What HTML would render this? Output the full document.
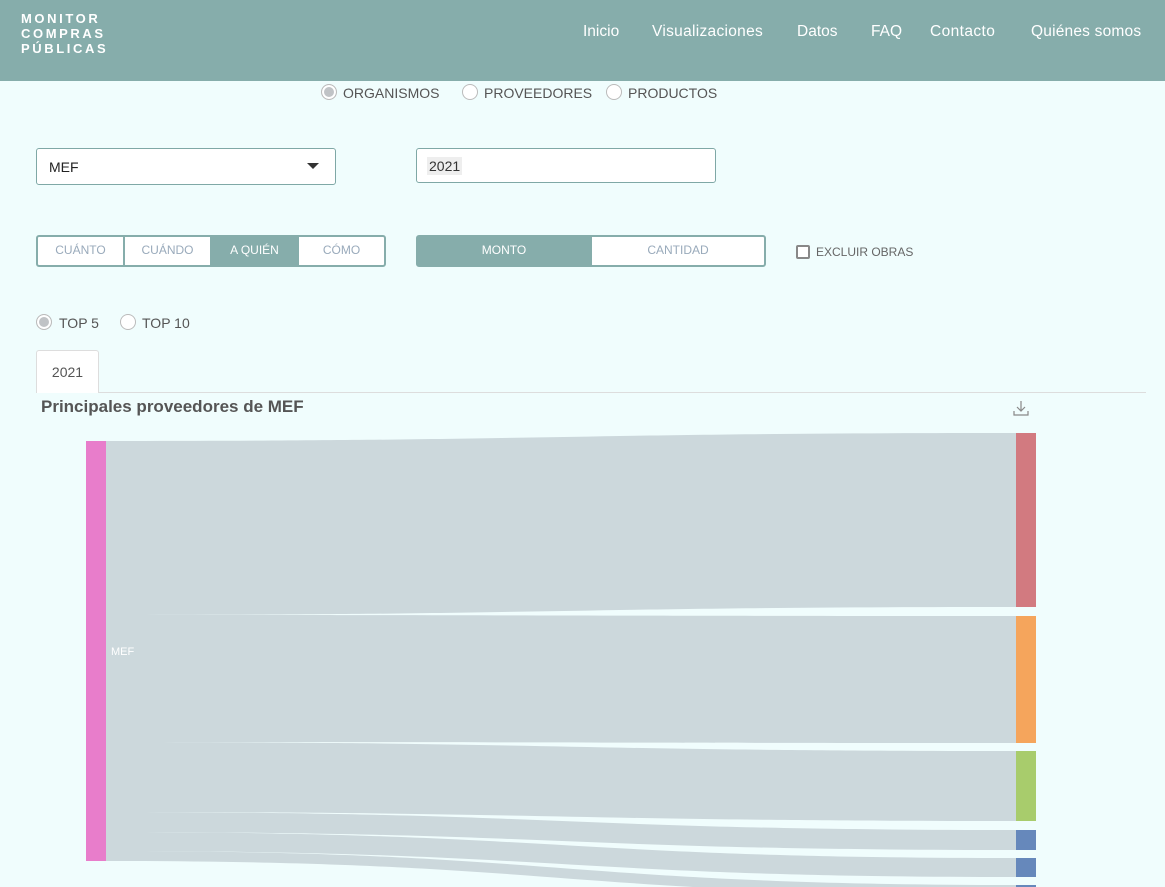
<!DOCTYPE html>
<html><head><meta charset="utf-8"><style>
*{box-sizing:border-box;margin:0;padding:0}
body{width:1165px;height:887px;overflow:hidden;background:#f0fdfd;font-family:"Liberation Sans",sans-serif;position:relative;color:#555}
.hdr{position:absolute;left:0;top:0;width:1165px;height:81px;background:#86adab}
.logo{position:absolute;left:21px;top:11px;color:#fff;font-weight:bold;font-size:13px;letter-spacing:2.6px;line-height:15px}
.nav{position:absolute;top:23px;color:#fff;font-size:15.5px;white-space:nowrap}
.a{position:absolute}
.radio{position:absolute;width:16px;height:16px;border-radius:50%;border:1px solid #bbb;background:#fff}
.radio.on{background:#c0c3c6;box-shadow:inset 0 0 0 2px #fff}
.lbl{position:absolute;font-size:14px;color:#555}
.box{position:absolute;background:#fff;border:1px solid #7fa8a6;border-radius:3px}
.seg{position:absolute;border:2px solid #86adab;border-radius:3px;display:flex;background:#fff}
.seg div{flex:1;text-align:center;font-size:12px;color:#9ab;line-height:27px;border-right:2px solid #86adab}
.seg div:last-child{border-right:none}
.seg .on{background:#86adab;color:#fff}
</style></head><body>
<div class="hdr"></div>
<div class="logo">MONITOR<br>COMPRAS<br>PÚBLICAS</div>
<div class="nav" style="left:583px;width:39px">Inicio</div>
<div class="nav" style="left:652px;width:115px;letter-spacing:0.3px">Visualizaciones</div>
<div class="nav" style="left:797px">Datos</div>
<div class="nav" style="left:871px">FAQ</div>
<div class="nav" style="left:930px;letter-spacing:0.4px">Contacto</div>
<div class="nav" style="left:1031px;letter-spacing:0.2px">Quiénes somos</div>

<div class="radio on" style="left:321px;top:84px"></div><div class="lbl" style="left:343px;top:85px">ORGANISMOS</div>
<div class="radio" style="left:462px;top:84px"></div><div class="lbl" style="left:484px;top:85px">PROVEEDORES</div>
<div class="radio" style="left:606px;top:84px"></div><div class="lbl" style="left:628px;top:85px">PRODUCTOS</div>

<div class="box" style="left:36px;top:148px;width:300px;height:37px"><span class="a" style="left:12px;top:10px;font-size:14px;color:#222">MEF</span><span class="a" style="left:270px;top:14px;width:0;height:0;border-left:6px solid transparent;border-right:6px solid transparent;border-top:6px solid #333"></span></div>
<div class="box" style="left:416px;top:148px;width:300px;height:35px"><span class="a" style="left:10px;top:8px;font-size:14px;color:#333;background:#eee;padding:1px 2px">2021</span></div>

<div class="seg" style="left:36px;top:235px;width:350px;height:32px"><div>CUÁNTO</div><div>CUÁNDO</div><div class="on">A QUIÉN</div><div>CÓMO</div></div>
<div class="seg" style="left:416px;top:235px;width:350px;height:32px"><div class="on">MONTO</div><div>CANTIDAD</div></div>
<div class="a" style="left:796px;top:245px;width:14px;height:14px;border:2px solid #888;border-radius:2px;background:#fff"></div>
<div class="a" style="left:816px;top:245px;font-size:12px;color:#666">EXCLUIR OBRAS</div>

<div class="radio on" style="left:36px;top:314px"></div><div class="lbl" style="left:59px;top:315px">TOP 5</div>
<div class="radio" style="left:120px;top:314px"></div><div class="lbl" style="left:142px;top:315px">TOP 10</div>

<div class="a" style="left:36px;top:392px;width:1110px;border-top:1px solid #ddd"></div>
<div class="a" style="left:36px;top:350px;width:63px;height:43px;background:#fff;border:1px solid #ddd;border-bottom:none;border-radius:3px 3px 0 0;font-size:14px;text-align:center;line-height:42px">2021</div>
<div class="a" style="left:41px;top:397px;font-size:17px;font-weight:bold;color:#555">Principales proveedores de MEF</div>
<svg class="a" style="left:1012px;top:399px" width="18" height="18" viewBox="0 0 18 18" fill="none" stroke="#888" stroke-width="1.2"><path d="M9 2v10M5 8l4 4 4-4M2 12v4h14v-4"/></svg>

<svg class="a" style="left:0;top:0" width="1165" height="887">
<g fill="#ccd8dc">
<path d="M106 441C561 441 561 433 1016 433L1016 607C561 607 561 615 106 615Z"/>
<path d="M106 615C561 615 561 616 1016 616L1016 743C561 743 561 742 106 742Z"/>
<path d="M106 742C561 742 561 751 1016 751L1016 821C561 821 561 812 106 812Z"/>
<path d="M106 812C561 812 561 830 1016 830L1016 850C561 850 561 832 106 832Z"/>
<path d="M106 832C561 832 561 858 1016 858L1016 877C561 877 561 851 106 851Z"/>
<path d="M106 851C561 851 561 885 1016 885L1016 895C561 895 561 861 106 861Z"/>
</g>
<rect x="86" y="441" width="20" height="420" fill="#e87dcb"/>
<rect x="1016" y="433" width="20" height="174" fill="#d27a80"/>
<rect x="1016" y="616" width="20" height="127" fill="#f5a55c"/>
<rect x="1016" y="751" width="20" height="70" fill="#a8cc6c"/>
<rect x="1016" y="830" width="20" height="20" fill="#6688bb"/>
<rect x="1016" y="858" width="20" height="19" fill="#6688bb"/>
<rect x="1016" y="885" width="20" height="10" fill="#6688bb"/>
<text x="111" y="655" font-size="11" fill="#fff" font-family="Liberation Sans">MEF</text>
</svg>
</body></html>
